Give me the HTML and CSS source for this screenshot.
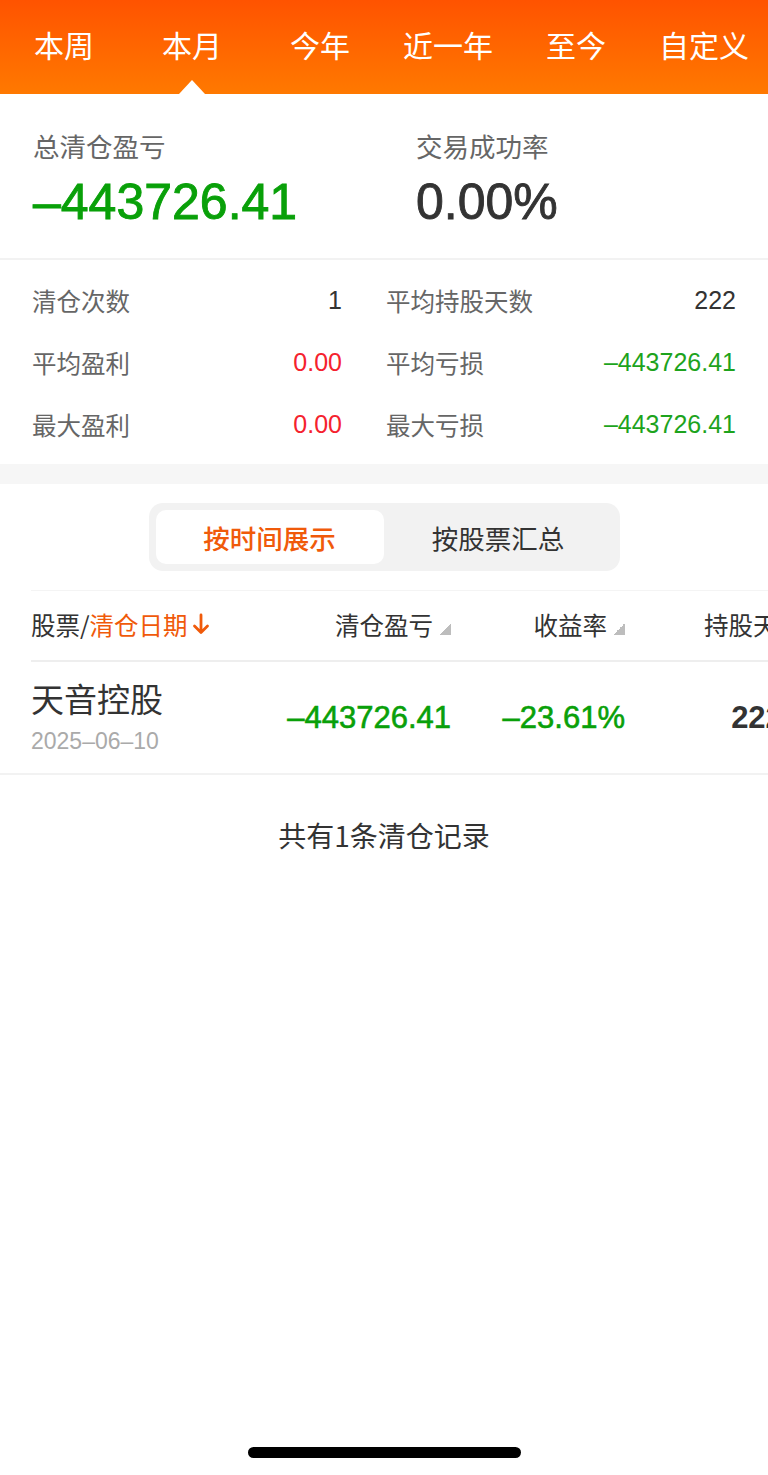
FILE: index.html
```html
<!DOCTYPE html>
<html lang="zh-CN">
<head>
<meta charset="utf-8">
<title>清仓记录</title>
<link rel="stylesheet" href="styles.css">
</head>
<body>
<div class="page">
  <nav class="tabs">
    <div class="tab">本周</div>
    <div class="tab active">本月</div>
    <div class="tab">今年</div>
    <div class="tab">近一年</div>
    <div class="tab">至今</div>
    <div class="tab">自定义</div>
  </nav>

  <section class="summary">
    <div class="sum-col">
      <div class="sum-label">总清仓盈亏</div>
      <div class="sum-value green">–443726.41</div>
    </div>
    <div class="sum-col">
      <div class="sum-label">交易成功率</div>
      <div class="sum-value dark">0.00%</div>
    </div>
  </section>

  <section class="stats">
    <div class="stat"><span class="stat-label">清仓次数</span><span class="stat-val dark">1</span></div>
    <div class="stat"><span class="stat-label">平均持股天数</span><span class="stat-val dark">222</span></div>
    <div class="stat"><span class="stat-label">平均盈利</span><span class="stat-val red">0.00</span></div>
    <div class="stat"><span class="stat-label">平均亏损</span><span class="stat-val green2">–443726.41</span></div>
    <div class="stat"><span class="stat-label">最大盈利</span><span class="stat-val red">0.00</span></div>
    <div class="stat"><span class="stat-label">最大亏损</span><span class="stat-val green2">–443726.41</span></div>
  </section>

  <div class="band"></div>

  <section class="seg-wrap">
    <div class="segment">
      <div class="seg-btn on">按时间展示</div>
      <div class="seg-btn">按股票汇总</div>
    </div>
  </section>

  <section class="table">
    <div class="thead">
      <div class="c1">股票/<span class="orange">清仓日期</span><svg class="down" width="18" height="24" viewBox="0 0 18 24"><path d="M9 3 V20.5 M2.5 14 L9 20.5 L15.5 14" fill="none" stroke="#f05a0a" stroke-width="2.8" stroke-linecap="round" stroke-linejoin="round"/></svg></div>
      <div class="c2">清仓盈亏<i class="sort"></i></div>
      <div class="c3">收益率<i class="sort"></i></div>
      <div class="c4">持股天数<i class="sort"></i></div>
    </div>
  </section>
  <div class="row-wrap">
    <div class="trow">
      <div class="c1">
        <div class="name">天音控股</div>
        <div class="date">2025–06–10</div>
      </div>
      <div class="c2 num green">–443726.41</div>
      <div class="c3 num green">–23.61%</div>
      <div class="c4 num bold dark">222</div>
    </div>
  </div>

  <p class="footer">共有1条清仓记录</p>
</div>
<div class="home-bar"></div>
</body>
</html>
```

FILE: styles.css
```css
* { box-sizing: border-box; }
html, body { margin: 0; padding: 0; }
body {
  width: 768px;
  height: 1475px;
  overflow: hidden;
  background: #fff;
  font-family: "Liberation Sans", "Noto Sans CJK SC", sans-serif;
  color: #333;
}
.page { width: 768px; }

.tabs {
  height: 94px;
  display: grid;
  grid-template-columns: repeat(6, 1fr);
  align-items: center;
  background: linear-gradient(180deg, #ff5300 0%, #ff7900 100%);
  padding-bottom: 6px;
}
.tab {
  position: relative;
  height: 88px;
  line-height: 88px;
  text-align: center;
  color: #fff;
  font-family: "Noto Sans CJK SC", sans-serif;
  font-size: 30px;
}
.tab.active::after {
  content: "";
  position: absolute;
  left: 50%;
  bottom: -6px;
  margin-left: -13px;
  width: 0; height: 0;
  border-left: 13px solid transparent;
  border-right: 13px solid transparent;
  border-bottom: 14px solid #fff;
}

.green { color: #09a009; }
.green2 { color: #1da31d; }
.red { color: #f5222d; }
.dark { color: #333; }
.orange { color: #f05a0a; }

.summary {
  display: grid;
  grid-template-columns: 383px 1fr;
  padding: 35px 0 28px 33px;
  border-bottom: 2px solid #f2f2f2;
}
.sum-label {
  font-family: "Noto Sans CJK SC", sans-serif;
  font-size: 26.5px;
  line-height: 34px;
  color: #666;
}
.sum-value {
  margin-top: 11px;
  font-size: 50px;
  line-height: 56px;
  -webkit-text-stroke: 0.9px currentColor;
}

.stats {
  display: grid;
  grid-template-columns: 310px 350px;
  column-gap: 44px;
  padding: 9px 32px;
}
.stat {
  height: 62px;
  display: flex;
  align-items: center;
  justify-content: space-between;
}
.stat-label {
  font-family: "Noto Sans CJK SC", sans-serif;
  font-size: 24.5px;
  color: #666;
}
.stat-val { font-size: 25px; }

.band { height: 20px; background: #f6f6f6; }

.seg-wrap {
  padding: 19px 0;
  display: flex;
  justify-content: center;
}
.segment {
  width: 471px;
  height: 68px;
  padding: 7px;
  background: #f2f2f2;
  border-radius: 14px;
  display: grid;
  grid-template-columns: 228px 1fr;
}
.seg-btn {
  display: flex;
  align-items: center;
  justify-content: center;
  font-family: "Noto Sans CJK SC", sans-serif;
  font-size: 26.5px;
  color: #333;
  border-radius: 10px;
}
.seg-btn.on {
  background: #fff;
  color: #f05a0a;
  font-weight: 500;
}

.table { padding-left: 31px; }
.thead, .trow {
  display: flex;
  white-space: nowrap;
}
.thead {
  height: 72px;
  align-items: center;
  border-top: 1px solid #f4f4f4;
  border-bottom: 2px solid #eeeeee;
  font-family: "Noto Sans CJK SC", sans-serif;
  font-size: 24.5px;
  color: #333;
  padding-bottom: 3px;
}
.c1 { width: 250px; flex: none; display: flex; align-items: center; }
.c2 { width: 170px; flex: none; text-align: right; }
.c3 { width: 174px; flex: none; text-align: right; }
.c4 { width: 106px; flex: none; margin-left: 79px; text-align: center; }
.down { margin-left: 4px; }
.sort {
  display: inline-block;
  width: 12px;
  height: 12px;
  margin-left: 6px;
  background: linear-gradient(135deg, transparent 50%, #bdbdbd 50%);
}

.row-wrap {
  border-bottom: 2px solid #f2f2f2;
  overflow: hidden;
}
.trow {
  height: 111px;
  padding-left: 31px;
  align-items: center;
}
.trow .c1 {
  flex-direction: column;
  align-items: flex-start;
  padding-bottom: 4px;
}
.name {
  font-family: "Noto Sans CJK SC", sans-serif;
  font-size: 33px;
  line-height: 40px;
  color: #333;
}
.date {
  margin-top: 10px;
  font-size: 23px;
  line-height: 26px;
  color: #aaa;
}
.num {
  font-size: 31px;
  -webkit-text-stroke: 0.6px currentColor;
}
.bold { font-weight: bold; -webkit-text-stroke: 0; }

.footer {
  margin: 42px 0 0;
  text-align: center;
  font-family: "Noto Sans CJK SC", sans-serif;
  font-size: 28px;
  line-height: 36px;
  color: #333;
}

.home-bar {
  position: fixed;
  left: 248px;
  bottom: 17px;
  width: 273px;
  height: 11px;
  border-radius: 6px;
  background: #000;
}
```
